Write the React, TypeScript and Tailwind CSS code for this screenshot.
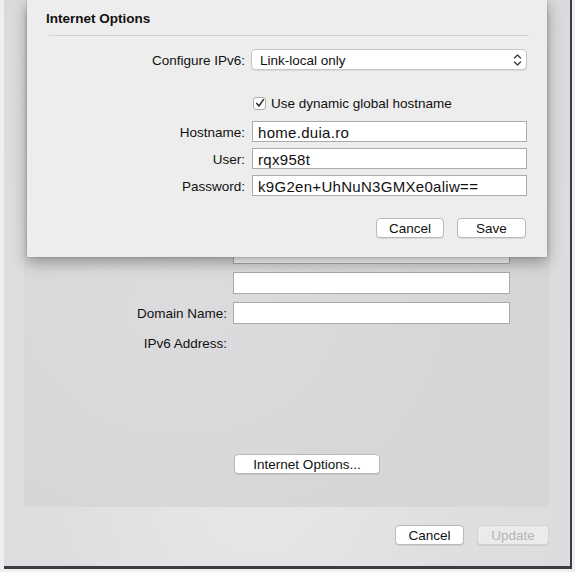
import React from 'react';

const font = { fontFamily: '"Liberation Sans", Arial, sans-serif' };

const Field = ({ value, className = '' }: { value?: string; className?: string }) => (
  <div
    className={`h-[21px] bg-white border border-[#ababab] flex items-center pl-[5px] pt-[2px] text-[15px] tracking-[0.3px] text-[#111] leading-none ${className}`}
  >
    {value}
  </div>
);

const MacButton = ({ label, className = '', disabled = false }: { label: string; className?: string; disabled?: boolean }) => (
  <div
    className={`h-[20px] rounded-[4px] border flex items-center justify-center pt-[2px] text-[13.5px] leading-none shadow-[0_1px_0_rgba(0,0,0,0.08)] ${
      disabled ? 'bg-[#ebebec] border-[#d3d3d5] text-[#b4b4b6]' : 'bg-white border-[#b9b9b9] text-[#111]'
    } ${className}`}
  >
    {label}
  </div>
);

const Chevrons = () => (
  <svg width="9" height="14" viewBox="0 0 9 14" fill="none" stroke="#3a3a3a" strokeWidth="1.3" strokeLinecap="round" strokeLinejoin="round">
    <path d="M1.5 5 L4.5 2 L7.5 5" />
    <path d="M1.5 9 L4.5 12 L7.5 9" />
  </svg>
);

const Check = () => (
  <svg width="10" height="10" viewBox="0 0 10 10" fill="none" stroke="#2a2a2a" strokeWidth="1.5" strokeLinecap="round" strokeLinejoin="round">
    <path d="M1.8 5.4 L4 8 L8.4 1.6" />
  </svg>
);

const Label = ({ text, w }: { text: string; w: string }) => (
  <span className={`${w} text-right text-[13.5px] leading-[16px] pt-[2px]`}>{text}</span>
);

export default function App() {
  return (
    <div className="relative w-[575px] h-[572px] bg-[#efefef] overflow-hidden text-[#111]" style={font}>
      {/* ── Background window ── */}
      <div className="ml-[4px] w-[568px] h-[569px] border-r-2 border-b-[3px] border-[#3a3e44] bg-[radial-gradient(ellipse_at_45%_78%,#e9e9eb_0%,#dfdfe1_45%,#dadadc_100%)] flex flex-col">
        {/* group box */}
        <div className="mx-5 mt-[10px] h-[497px] rounded-[5px] bg-[#d6d7d9]/80 bg-[radial-gradient(ellipse_at_30%_60%,#dcdcde_0%,#d5d6d8_60%)] flex flex-col pt-[232px] pb-[33px]">
          <div className="flex flex-col gap-2">
            <div className="flex items-center h-[22px]">
              <div className="w-[203px]" />
              <Field className="ml-[6px] w-[277px] h-[22px]" />
            </div>
            <div className="flex items-center h-[22px]">
              <div className="w-[203px]" />
              <Field className="ml-[6px] w-[277px] h-[22px]" />
            </div>
            <div className="flex items-center h-[22px]">
              <Label text="Domain Name:" w="w-[203px]" />
              <Field className="ml-[6px] w-[277px] h-[22px]" />
            </div>
            <div className="flex items-center h-[22px]">
              <Label text="IPv6 Address:" w="w-[203px]" />
            </div>
          </div>
          <div className="flex-1" />
          <MacButton label="Internet Options..." className="ml-[210px] w-[146px]" />
        </div>

        {/* bottom buttons */}
        <div className="mt-[18px] flex justify-end gap-[13px] pr-[21px]">
          <MacButton label="Cancel" className="w-[69px]" />
          <MacButton label="Update" className="w-[72px]" disabled />
        </div>
      </div>

      {/* ── Sheet ── */}
      <div className="absolute left-[27px] top-0 w-[520px] h-[257px] bg-[#ededed] shadow-[0_5px_14px_rgba(0,0,0,0.35),0_0_2px_rgba(0,0,0,0.25)] flex flex-col">
        <div className="pt-[11px] pl-[19px] h-[27px] leading-[16px] text-[13.5px] font-bold">Internet Options</div>
        <div className="mt-[8px] ml-[22px] mr-[18px] border-t border-[#d2d2d2]" />

        {/* Configure IPv6 */}
        <div className="mt-[13px] flex items-center h-[21px]">
          <Label text="Configure IPv6:" w="w-[218px]" />
          <div className="ml-[6px] w-[276px] h-[21px] rounded-[4px] bg-white border border-[#c6c6c6] shadow-[0_1px_1px_rgba(0,0,0,0.08)] flex items-center justify-between pl-[8px] pr-[4px] text-[13.5px] leading-[16px]">
            <span className="pt-[2px]">Link-local only</span>
            <Chevrons />
          </div>
        </div>

        {/* checkbox */}
        <div className="mt-[25px] flex items-center h-[16px]">
          <div className="ml-[226px] w-[13px] h-[13px] rounded-[3px] bg-white border border-[#acacac] flex items-center justify-center">
            <Check />
          </div>
          <span className="ml-[5px] pt-[2px] text-[13.5px] leading-[14px]">Use dynamic global hostname</span>
        </div>

        {/* fields */}
        <div className="mt-[10px] flex flex-col gap-[6px]">
          <div className="flex items-center h-[21px]">
            <Label text="Hostname:" w="w-[218px]" />
            <Field value="home.duia.ro" className="ml-[7px] w-[275px]" />
          </div>
          <div className="flex items-center h-[21px]">
            <Label text="User:" w="w-[218px]" />
            <Field value="rqx958t" className="ml-[7px] w-[275px]" />
          </div>
          <div className="flex items-center h-[21px]">
            <Label text="Password:" w="w-[218px]" />
            <Field value="k9G2en+UhNuN3GMXe0aliw==" className="ml-[7px] w-[275px]" />
          </div>
        </div>

        <div className="mt-[22px] flex justify-end gap-[13px] pr-[21px]">
          <MacButton label="Cancel" className="w-[68px]" />
          <MacButton label="Save" className="w-[69px]" />
        </div>
      </div>
    </div>
  );
}
